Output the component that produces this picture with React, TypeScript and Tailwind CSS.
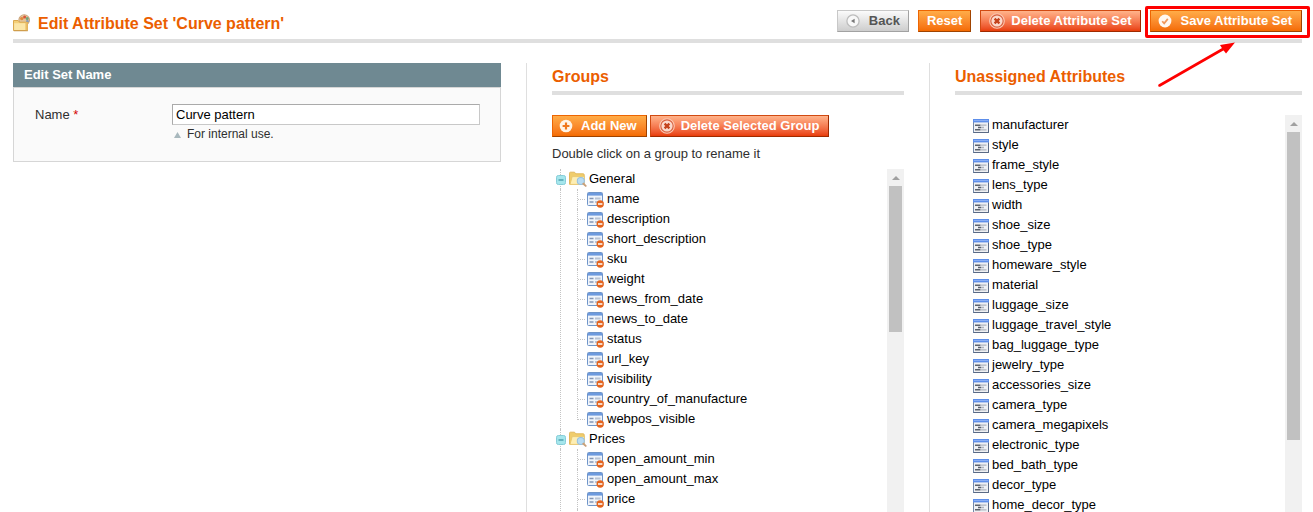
import type { ReactNode } from "react";

const groups = [
  {
    name: "General",
    items: [
      "name",
      "description",
      "short_description",
      "sku",
      "weight",
      "news_from_date",
      "news_to_date",
      "status",
      "url_key",
      "visibility",
      "country_of_manufacture",
      "webpos_visible",
    ],
    more: false,
  },
  { name: "Prices", items: ["open_amount_min", "open_amount_max", "price"], more: true },
];

const unassigned = [
  "manufacturer",
  "style",
  "frame_style",
  "lens_type",
  "width",
  "shoe_size",
  "shoe_type",
  "homeware_style",
  "material",
  "luggage_size",
  "luggage_travel_style",
  "bag_luggage_type",
  "jewelry_type",
  "accessories_size",
  "camera_type",
  "camera_megapixels",
  "electronic_type",
  "bed_bath_type",
  "decor_type",
  "home_decor_type",
];

function TitleIcon() {
  return (
    <svg width="18" height="18" viewBox="0 0 18 18" className="shrink-0">
      <circle cx="11.2" cy="6" r="5.8" fill="#c99f74" />
      <circle cx="11.2" cy="6" r="4.9" fill="#e3c49b" />
      <circle cx="8.8" cy="4.6" r="1.7" fill="#e08a3c" />
      <circle cx="11.6" cy="3" r="1.5" fill="#d9553a" />
      <circle cx="14.2" cy="4.4" r="1.5" fill="#6fa37a" />
      <circle cx="14.4" cy="7.3" r="1.4" fill="#7e9bc4" />
      <path d="M.5 6.5h4.6l1.4 1.7h8v8.3H.5z" fill="#f3cf78" stroke="#dba94f" />
      <path d="M1.2 9.2h11.3v6.8H1.2z" fill="#fbe6a8" />
      <path d="M12.6 8.5h2v8h-2z" fill="#e9bd68" />
      <path d="M.8 16.8h14" stroke="#c8964a" strokeWidth=".8" />
    </svg>
  );
}

function BackIcon() {
  return (
    <svg width="14" height="14" viewBox="0 0 14 14">
      <circle cx="7" cy="7" r="6.1" fill="#f8f8f8" stroke="#bdbdbd" strokeWidth="1.3" />
      <path d="M8.6 4.8v4.4L5 7z" fill="#777" />
    </svg>
  );
}

function DeleteIcon() {
  return (
    <svg width="16" height="16" viewBox="0 0 16 16">
      <circle cx="8" cy="8" r="7.3" fill="#d8613f" stroke="#fbc9b4" strokeWidth="1.1" />
      <circle cx="8" cy="8" r="5.6" fill="#fbd9cc" />
      <path d="M5.6 5.6l4.800 4.800M10.400 5.600l-4.800 4.800" stroke="#c4421c" strokeWidth="2.3" />
    </svg>
  );
}

function SaveIcon() {
  return (
    <svg width="14" height="14" viewBox="0 0 14 14">
      <circle cx="7" cy="7" r="6.4" fill="#fff8f0" />
      <path d="M4.200 7.200l2 2.200L9.800 4.900" fill="none" stroke="#f0985a" strokeWidth="1.7" />
    </svg>
  );
}

function AddIcon() {
  return (
    <svg width="14" height="14" viewBox="0 0 14 14">
      <circle cx="7" cy="7" r="6.3" fill="#fff4e6" />
      <path d="M7 3.6v6.8M3.6 7h6.8" stroke="#f0781c" strokeWidth="2.2" />
    </svg>
  );
}

function ToggleIcon() {
  return (
    <svg width="10" height="10" viewBox="0 0 10 10">
      <rect x=".5" y=".5" width="9" height="9" rx="1.8" fill="#a5e6ec" stroke="#86cdd8" />
      <path d="M2.5 5h5" stroke="#3a8fa2" strokeWidth="1.2" />
    </svg>
  );
}

function FolderIcon() {
  return (
    <svg width="18" height="16" viewBox="0 0 18 16">
      <path d="M.5 2.2Q.5 1.2 1.5 1.2h4l1.3 1.6h7.4q1 0 1 1v9.4H.5z" fill="#f0cd6c" stroke="#e2b95e" />
      <path d="M1 13.4L3.200 5.600h12.400l-1.600 7.800z" fill="#fdeeb4" stroke="#e6c46c" strokeWidth=".8" />
      <circle cx="11.800" cy="10" r="3.500" fill="#b9dcf3" stroke="#98c2e2" strokeWidth="1.1" />
      <path d="M14.400 12.700l2.300 2.200" stroke="#c9a07c" strokeWidth="1.9" strokeLinecap="round" />
    </svg>
  );
}

function AssignedIcon() {
  return (
    <svg width="18" height="16" viewBox="0 0 18 16">
      <rect x=".5" y=".5" width="15" height="13" rx="1" fill="#eff4fb" stroke="#6f95c9" />
      <path d="M1 1h14v2.600H1z" fill="#6d9ade" />
      <path d="M2.500 6.500h4M2.500 10h4" stroke="#8496b5" strokeWidth="1.600" />
      <path d="M8 6.500h5.600M8 10h3" stroke="#b9c3d3" strokeWidth="1.800" />
      <circle cx="13.200" cy="12" r="3.700" fill="#e4641f" />
      <path d="M11 12h4.400" stroke="#fff" strokeWidth="1.500" />
    </svg>
  );
}

function UnassignedIcon() {
  return (
    <svg width="16" height="14" viewBox="0 0 16 14">
      <rect x=".5" y=".5" width="15" height="13" fill="#eef0f4" stroke="#7388aa" />
      <path d="M0 0h16v3.4H0z" fill="#5d8eea" />
      <path d="M1 1h14v.9H1z" fill="#8fb2f5" />
      <path d="M2 6.200h5.500M5 8.500h3M2 10.800h5.500" stroke="#5c626d" strokeWidth="1.500" />
      <path d="M7.500 6.200h6M8 8.500h3M7.500 10.800h6" stroke="#b0b5bf" strokeWidth="1.300" />
      <path d="M.5 13.5h15V4" fill="none" stroke="#5a6a85" />
    </svg>
  );
}

const tones = {
  plain:
    "border-[#c8c8c8] border-r-[#a2a2a2] border-b-[#a2a2a2] from-[#fbfbfb] to-[#cdcdcd] text-[#555]",
  orange:
    "border-[#ed6502] border-r-[#a04300] border-b-[#a04300] from-[#ffac47] to-[#f46b00] text-white",
  red: "border-[#d14a12] border-r-[#a02a00] border-b-[#a02a00] from-[#ffb38a] to-[#e83c05] text-white",
};

function Button({
  tone,
  spacing,
  icon,
  children,
}: {
  tone: keyof typeof tones;
  spacing: string;
  icon?: ReactNode;
  children: ReactNode;
}) {
  return (
    <button
      type="button"
      className={`flex h-[22px] shrink-0 items-center whitespace-nowrap border bg-linear-to-b text-[13px] font-bold ${tones[tone]} ${spacing}`}
    >
      {icon}
      <span>{children}</span>
    </button>
  );
}

function ScrollBar({ thumb }: { thumb: string }) {
  return (
    <div aria-hidden="true" className="w-[17px] shrink-0 bg-[#f1f1f1]">
      <div className="flex h-[17px] items-center justify-center">
        <svg width="8" height="4" viewBox="0 0 8 4">
          <path d="M4 0l4 4H0z" fill="#a0a0a0" />
        </svg>
      </div>
      <div className={`mx-[2px] bg-[#c1c1c1] ${thumb}`} />
    </div>
  );
}

function SectionTitle({ children }: { children: ReactNode }) {
  return (
    <h2 className="shrink-0 border-b-4 border-[#dfdfdf] text-[16px] leading-7 font-bold text-[#eb5e00]">
      {children}
    </h2>
  );
}

export default function App() {
  return (
    <div className="flex h-screen flex-col overflow-hidden bg-white pr-[11px] pl-[13px] font-['Liberation_Sans',Arial,sans-serif] text-[13px] text-[#2f2f2f]">
      <header className="flex shrink-0 items-start justify-between border-b-4 border-[#dfdfdf] pt-[10px] pb-[7px]">
        <div className="flex h-[22px] items-end gap-[7px]">
          <TitleIcon />
          <h1 className="text-[16px] leading-4 font-bold whitespace-nowrap text-[#eb5e00]">
            Edit Attribute Set 'Curve pattern'
          </h1>
        </div>
        <div className="flex gap-[9px]">
          <Button tone="plain" spacing="gap-[9px] px-2" icon={<BackIcon />}>
            Back
          </Button>
          <Button tone="orange" spacing="px-2">
            Reset
          </Button>
          <Button tone="red" spacing="gap-[6px] pl-2 pr-2" icon={<DeleteIcon />}>
            Delete Attribute Set
          </Button>
          <div className="relative">
            <Button tone="orange" spacing="gap-[9px] pl-[7px] pr-[9px]" icon={<SaveIcon />}>
              Save Attribute Set
            </Button>
            <div className="pointer-events-none absolute -top-1 -right-2 -bottom-[6px] -left-[5px] rounded-[2px] border-3 border-[#fe0000]" />
            <svg
              width="84"
              height="52"
              viewBox="0 0 84 52"
              className="pointer-events-none absolute top-[30px] left-1"
            >
              <path d="M5.500 45.500L70 8.500" stroke="#fe0000" strokeWidth="2.600" strokeLinecap="round" />
              <path d="M81 2.500L66 5 68.500 9 72 13.500z" fill="#fe0000" />
            </svg>
          </div>
        </div>
      </header>

      <main className="mt-5 grid min-h-0 flex-1 grid-cols-[513fr_403fr_373fr] grid-rows-[minmax(0,1fr)]">
        <section className="min-w-0 pr-[25px]">
          <h2 className="bg-[#6f8992] px-[11px] text-[13px] leading-6 font-bold text-white">
            Edit Set Name
          </h2>
          <form className="flex border border-[#d6d6d6] bg-[#fafafa] pt-4 pr-5 pb-[18px] pl-[21px]">
            <label htmlFor="set-name" className="w-[137px] shrink-0 leading-[21px]">
              Name <span className="text-[#d40707]">*</span>
            </label>
            <div className="min-w-0 flex-1">
              <input
                id="set-name"
                type="text"
                defaultValue="Curve pattern"
                className="block h-[21px] w-full border border-[#c8c8c8] border-t-[#aaa] border-l-[#aaa] bg-white px-[3px] text-[13px] text-black outline-none"
              />
              <p className="flex items-center gap-[6px] pl-[2px] text-[12px] leading-[18px]">
                <svg width="7" height="6" viewBox="0 0 7 6" className="mt-[2px]">
                  <path d="M3.500 0L7 6H0z" fill="#a8b8bd" />
                </svg>
                For internal use.
              </p>
            </div>
          </form>
        </section>

        <section className="flex min-w-0 flex-col border-l border-[#dfdfdf] px-[25px]">
          <SectionTitle>Groups</SectionTitle>
          <div className="mt-5 flex gap-[3px]">
            <Button tone="orange" spacing="gap-2 pl-[6px] pr-[9px]" icon={<AddIcon />}>
              Add New
            </Button>
            <Button tone="red" spacing="gap-[6px] pl-2 pr-[9px]" icon={<DeleteIcon />}>
              Delete Selected Group
            </Button>
          </div>
          <p className="pt-[7px] pb-[5px] leading-5">Double click on a group to rename it</p>
          <div className="flex min-h-0 flex-1">
            <ul className="min-w-0 flex-1 overflow-hidden pl-1 leading-5 text-black">
              {groups.map((group) => (
                <li key={group.name}>
                  <div className="relative flex h-5 items-center">
                    <span className="absolute inset-y-0 left-1 border-l border-dotted border-[#c4c4c4]" />
                    <span className="relative flex h-5 w-[13px] items-center pt-[2px]">
                      <ToggleIcon />
                    </span>
                    <FolderIcon />
                    <span className="pl-[2px]">{group.name}</span>
                  </div>
                  <ul className="ml-1 border-l border-dotted border-[#c4c4c4] pl-4">
                    {group.items.map((item, index) => (
                      <li key={item} className="flex h-5 items-center">
                        <span
                          className={`self-start border-l border-dotted border-[#c4c4c4] ${
                            !group.more && index === group.items.length - 1 ? "h-[11px]" : "h-5"
                          }`}
                        />
                        <span className="mr-[2px] w-[7px] border-t border-dotted border-[#c4c4c4]" />
                        <span className="pt-[2px]">
                          <AssignedIcon />
                        </span>
                        <span className="pl-[2px]">{item}</span>
                      </li>
                    ))}
                    {group.more && (
                      <li aria-hidden="true" className="h-5 border-l border-dotted border-[#c4c4c4]" />
                    )}
                  </ul>
                </li>
              ))}
            </ul>
            <ScrollBar thumb="h-[146px]" />
          </div>
        </section>

        <section className="flex min-w-0 flex-col border-l border-[#dfdfdf] pl-[25px]">
          <SectionTitle>Unassigned Attributes</SectionTitle>
          <div className="mt-5 flex min-h-0 flex-1">
            <ul className="min-w-0 flex-1 overflow-hidden pl-[18px] leading-5 text-black">
              {unassigned.map((item) => (
                <li key={item} className="flex h-5 items-center gap-[3px]">
                  <span className="pt-[2px]">
                    <UnassignedIcon />
                  </span>
                  {item}
                </li>
              ))}
            </ul>
            <ScrollBar thumb="h-[308px]" />
          </div>
        </section>
      </main>
    </div>
  );
}
